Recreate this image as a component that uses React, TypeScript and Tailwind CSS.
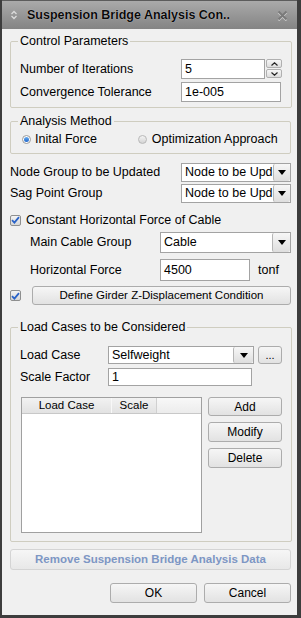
import React from "react";

const Arrow = () => (
  <svg width="8" height="5" viewBox="0 0 8 5">
    <path d="M0 0 H8 L4 5 Z" fill="#000" />
  </svg>
);

const Select = ({ value, w, arrowW = 17, h }: { value: string; w: string; arrowW?: number; h: string }) => (
  <div className={`${w} ${h} flex border border-[#a3a3a3] bg-white`}>
    <div className="flex-1 overflow-hidden whitespace-nowrap pl-[3px] leading-none flex items-center">{value}</div>
    <div
      style={{ width: arrowW }}
      className="flex items-center justify-center border-l border-[#b5b5b5] rounded-[2px] bg-linear-to-b from-[#f7f7f7] to-[#dedede]"
    >
      <Arrow />
    </div>
  </div>
);

const Check = () => (
  <div className="w-[11px] h-[11px] border border-[#8e8f8f] rounded-[2px] bg-linear-to-b from-[#f4f4f4] to-[#d6d6d6] flex items-center justify-center">
    <svg width="9" height="8" viewBox="0 0 9 8">
      <path d="M1 4.2 L3.4 6.6 L8 1.2" stroke="#2a63c8" strokeWidth="1.8" fill="none" />
    </svg>
  </div>
);

const Btn = ({ children, className = "" }: { children: React.ReactNode; className?: string }) => (
  <div
    className={`flex items-center justify-center border border-[#acacac] rounded-[3px] bg-linear-to-b from-[#f6f6f6] to-[#e2e2e2] text-[11.5px] ${className}`}
  >
    {children}
  </div>
);

const Group = ({ title, children, className = "" }: { title: string; children: React.ReactNode; className?: string }) => (
  <fieldset className={`border border-[#cfcdc0] rounded-[2px] pl-[9px] pr-[9px] ${className}`}>
    <legend className="ml-[-2px] px-[2px] leading-[14px]">{title}</legend>
    {children}
  </fieldset>
);

export default function App() {
  return (
    <div className="w-[301px] h-[618px] flex flex-col bg-[#f0f0f0] border-l-2 border-r-4 border-b-[3px] border-[#3d3d3d] font-['Liberation_Sans',Arial,sans-serif] text-[12.5px] text-black">
      {/* title bar */}
      <div className="h-[29px] shrink-0 flex items-center bg-linear-to-b from-[#aaaaaa] to-[#848484] border-t border-[#5c5c5c]">
        <svg className="ml-[8px]" width="8" height="10" viewBox="0 0 8 10">
          <path d="M1.5 4 L4 1.5 L6.5 4 M1.5 6 L4 8.5 L6.5 6" stroke="#dcdcdc" strokeWidth="1.3" fill="none" />
        </svg>
        <span className="ml-[9px] font-bold text-[12.5px] text-[#0a0a0a] [text-shadow:0_0_1px_rgba(255,255,255,0.7)]">
          Suspension Bridge Analysis Con..
        </span>
        <svg className="ml-auto mr-[9px]" width="11" height="11" viewBox="0 0 11 11">
          <path d="M1.5 2.5 L9.5 10.5 M9.5 2.5 L1.5 10.5" stroke="#d0d0d0" strokeWidth="2" />
          <path d="M1.5 1.5 L9.5 9.5 M9.5 1.5 L1.5 9.5" stroke="#7a7a7a" strokeWidth="2" />
        </svg>
      </div>

      <div className="flex flex-col pl-[8px] pr-[6px]">
        <Group title="Control Parameters" className="mt-[5px] pb-[5px]">
          <div className="mt-[11px] h-[20px] flex items-center">
            <span className="w-[161px]">Number of Iterations</span>
            <div className="w-[84px] h-full border border-[#a3a3a3] bg-white pl-[3px] flex items-center">5</div>
            <div className="ml-[1px] flex flex-col gap-[1px] h-full">
              <div className="w-[16px] h-[9px] border border-[#b0b0b0] rounded-[2px] bg-linear-to-b from-[#f7f7f7] to-[#dddddd] flex items-center justify-center">
                <svg width="7" height="4" viewBox="0 0 7 4"><path d="M0.5 3.5 L3.5 0.8 L6.5 3.5" stroke="#222" strokeWidth="1.2" fill="none" /></svg>
              </div>
              <div className="w-[16px] h-[9px] border border-[#b0b0b0] rounded-[2px] bg-linear-to-b from-[#f7f7f7] to-[#dddddd] flex items-center justify-center">
                <svg width="7" height="4" viewBox="0 0 7 4"><path d="M0.5 0.5 L3.5 3.2 L6.5 0.5" stroke="#222" strokeWidth="1.2" fill="none" /></svg>
              </div>
            </div>
          </div>
          <div className="mt-[3px] h-[20px] flex items-center">
            <span className="w-[161px]">Convergence Tolerance</span>
            <div className="w-[100px] h-full border border-[#a3a3a3] bg-white pl-[3px] flex items-center">1e-005</div>
          </div>
        </Group>

        <Group title="Analysis Method" className="mt-[6px] pb-[7px]">
          <div className="mt-[4px] h-[14px] flex items-center">
            <div className="ml-[2px] w-[9px] h-[9px] rounded-full border border-[#9a9a9a] bg-white flex items-center justify-center">
              <div className="w-[5px] h-[5px] rounded-full bg-linear-to-b from-[#6aaef0] to-[#1d64c8]" />
            </div>
            <span className="ml-[4px]">Inital Force</span>
            <div className="ml-[41px] w-[9px] h-[9px] rounded-full border border-[#b8b8b8] bg-linear-to-b from-[#f4f4f4] to-[#d4d4d4]" />
            <span className="ml-[5px]">Optimization Approach</span>
          </div>
        </Group>

        <div className="mt-[9px] h-[19px] flex items-center">
          <span className="w-[171px]">Node Group to be Updated</span>
          <Select value="Node to be Upd" w="w-[110px]" h="h-full" />
        </div>
        <div className="mt-[2px] h-[19px] flex items-center">
          <span className="w-[171px]">Sag Point Group</span>
          <Select value="Node to be Upd" w="w-[110px]" h="h-full" />
        </div>

        <div className="mt-[10px] h-[14px] flex items-center">
          <Check />
          <span className="ml-[5px]">Constant Horizontal Force of Cable</span>
        </div>
        <div className="mt-[5px] h-[21px] flex items-center">
          <span className="ml-[20px] w-[130px]">Main Cable Group</span>
          <Select value="Cable" w="w-[131px]" h="h-full" arrowW={18} />
        </div>
        <div className="mt-[6px] h-[22px] flex items-center">
          <span className="ml-[20px] w-[130px]">Horizontal Force</span>
          <div className="w-[90px] h-full border border-[#a3a3a3] bg-white pl-[3px] flex items-center">4500</div>
          <span className="ml-[8px]">tonf</span>
        </div>
        <div className="mt-[5px] h-[19px] flex items-center">
          <Check />
          <Btn className="ml-[11px] flex-1 h-full">Define Girder Z-Displacement Condition</Btn>
        </div>

        <Group title="Load Cases to be Considered" className="mt-[15px] pb-[8px]">
          <div className="mt-[12px] h-[18px] flex items-center">
            <span className="w-[88px]">Load Case</span>
            <Select value="Selfweight" w="w-[146px]" h="h-full" arrowW={20} />
            <Btn className="ml-[4px] w-[24px] h-full text-[11px]">...</Btn>
          </div>
          <div className="mt-[4px] h-[18px] flex items-center">
            <span className="w-[88px]">Scale Factor</span>
            <div className="w-[144px] h-full border border-[#a3a3a3] bg-white pl-[3px] flex items-center">1</div>
          </div>
          <div className="mt-[11px] h-[136px] flex">
            <div className="ml-[1px] w-[181px] h-full border border-[#a0a0a0] bg-white flex flex-col">
              <div className="h-[16px] flex text-[11.5px] leading-none border-b border-[#c8c8c8]">
                <div className="w-[90px] flex items-center justify-center bg-linear-to-b from-[#f2f2f2] to-[#e2e2e2] border-r border-[#f8f8f8]">Load Case</div>
                <div className="w-[45px] flex items-center justify-center bg-linear-to-b from-[#f2f2f2] to-[#e2e2e2] border-r border-[#d0d0d0]">Scale</div>
                <div className="flex-1 bg-linear-to-b from-[#f8f8f8] to-[#ececec]" />
              </div>
            </div>
            <div className="ml-[6px] flex flex-col gap-[6px]">
              <Btn className="w-[74px] h-[19px] text-[12px]">Add</Btn>
              <Btn className="w-[74px] h-[20px] text-[12px]">Modify</Btn>
              <Btn className="w-[74px] h-[20px] text-[12px]">Delete</Btn>
            </div>
          </div>
        </Group>

        <Btn className="mt-[7px] h-[21px] font-bold text-[11.5px] text-[#7d96c4] from-[#f4f4f4] to-[#e8e8e8] border-[#d4d4d4]">
          Remove Suspension Bridge Analysis Data
        </Btn>

        <div className="mt-[13px] h-[20px] flex justify-end gap-[7px]">
          <Btn className="w-[87px] h-full text-[12px]">OK</Btn>
          <Btn className="w-[87px] h-full text-[12px]">Cancel</Btn>
        </div>
      </div>
    </div>
  );
}
